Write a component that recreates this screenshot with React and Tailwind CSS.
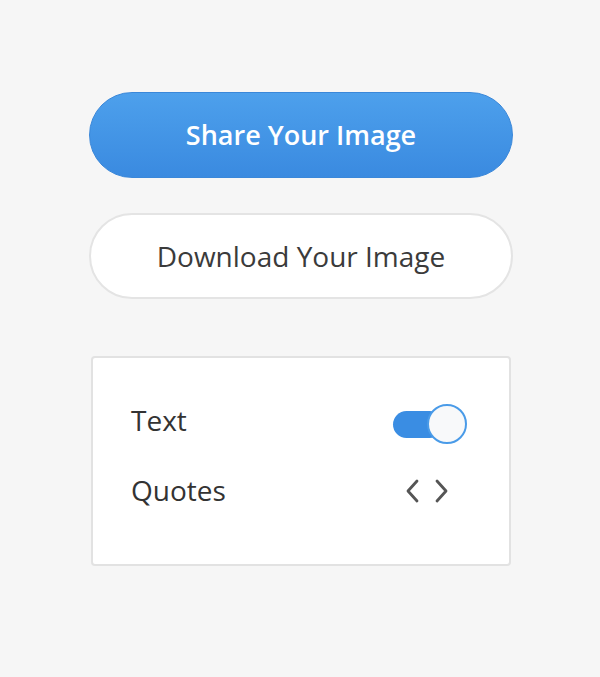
export default function App() {
  return (
    <div className="min-h-[677px] w-[600px] bg-[#f6f6f6]" style={{ fontFamily: '"Open Sans", sans-serif' }}>
      <div className="ml-[89px] w-[424px] pt-[92px]">
        <button className="flex h-[86px] w-full items-center justify-center rounded-full border border-[#3a87d9] bg-gradient-to-b from-[#4da0ec] to-[#3a8ae0] text-[27px] font-semibold text-white">
          Share Your Image
        </button>
        <button className="mt-[35px] flex h-[86px] w-full items-center justify-center rounded-full border-2 border-[#e4e4e4] bg-white text-[28px] text-[#3b3b3b]">
          Download Your Image
        </button>
        <div className="mt-[57px] ml-[2px] h-[210px] w-[420px] rounded-[4px] border-2 border-[#e2e2e2] bg-white pl-[38px] pr-[42px] pt-[46px]">
          <div className="flex h-[40px] items-center justify-between">
            <span className="-mt-[8px] text-[28px] text-[#333]">Text</span>
            <div className="relative h-[40px] w-[74px]">
              <div className="absolute left-0 top-[7px] h-[27px] w-[50px] rounded-full bg-[#3a8de3]" />
              <div className="absolute right-0 top-0 h-[40px] w-[40px] rounded-full border-2 border-[#4a9be8] bg-[#f8f9fa]" />
            </div>
          </div>
          <div className="mt-[27px] flex h-[40px] items-center justify-between">
            <span className="-mt-[2px] text-[28px] text-[#333]">Quotes</span>
            <div className="flex items-center gap-[16px] pr-[19px]">
              <svg width="13" height="26" viewBox="0 0 13 26" fill="none" stroke="#555" strokeWidth="2.8" strokeLinecap="round" strokeLinejoin="round">
                <path d="M11 3 L2 13 L11 23" />
              </svg>
              <svg width="13" height="26" viewBox="0 0 13 26" fill="none" stroke="#555" strokeWidth="2.8" strokeLinecap="round" strokeLinejoin="round">
                <path d="M2 3 L11 13 L2 23" />
              </svg>
            </div>
          </div>
        </div>
      </div>
    </div>
  );
}
